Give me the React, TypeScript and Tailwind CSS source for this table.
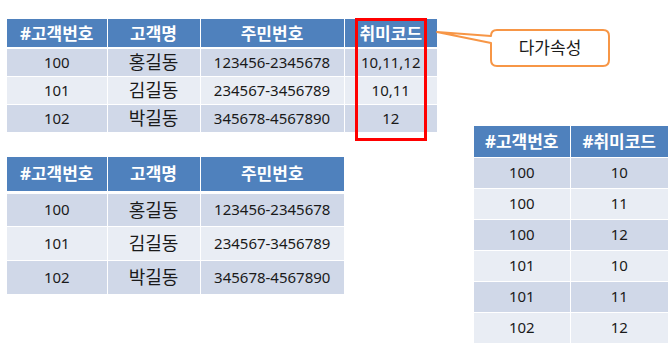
import React from 'react';

type Col = { label: string; width: number };

const font = { fontFamily: '"Noto Sans", "Noto Sans CJK KR", sans-serif' };

const customerCols: Col[] = [
  { label: '#고객번호', width: 100 },
  { label: '고객명', width: 93 },
  { label: '주민번호', width: 144 },
];

const customers = [
  ['100', '홍길동', '123456-2345678', '10,11,12'],
  ['101', '김길동', '234567-3456789', '10,11'],
  ['102', '박길동', '345678-4567890', '12'],
];

const hobbies = [
  ['100', '10'],
  ['100', '11'],
  ['100', '12'],
  ['101', '10'],
  ['101', '11'],
  ['102', '12'],
];

function DataTable({
  cols,
  rows,
  headH,
  headGap,
  rowH,
}: {
  cols: Col[];
  rows: string[][];
  headH: string;
  headGap: string;
  rowH: string;
}) {
  const total = cols.reduce((s, c) => s + c.width, 0);
  return (
    <table className="border-collapse table-fixed" style={{ ...font, width: total }}>
      <thead>
        <tr className={`${headH} ${headGap} bg-[#4f81bd] border-white`}>
          {cols.map((c) => (
            <th
              key={c.label}
              style={{ width: c.width }}
              className="p-0 text-[17px] font-bold text-white text-center border-l border-white first:border-l-0 leading-none"
            >
              {c.label}
            </th>
          ))}
        </tr>
      </thead>
      <tbody>
        {rows.map((r, i) => (
          <tr
            key={i}
            className={`${rowH} ${i % 2 === 0 ? 'bg-[#d0d8e8]' : 'bg-[#e9edf4]'} border-t border-white first:border-t-0`}
          >
            {r.map((v, j) => (
              <td
                key={j}
                className={`p-0 text-center text-[#1a1a1a] border-l border-white first:border-l-0 leading-none ${
                  /[가-힣]/.test(v) ? 'text-[18px]' : 'text-[15px]'
                }`}
              >
                {v}
              </td>
            ))}
          </tr>
        ))}
      </tbody>
    </table>
  );
}

export default function App() {
  return (
    <div className="relative w-[671px] h-[345px] bg-white flex items-start overflow-hidden">
      <div className="flex flex-col items-start gap-[25px] pl-[7px] pt-[19px]">
        <DataTable
          cols={[...customerCols, { label: '취미코드', width: 93 }]}
          rows={customers}
          headH="h-[29px]"
          headGap="border-b-2"
          rowH="h-[28px]"
        />
        <DataTable
          cols={customerCols}
          rows={customers.map((r) => r.slice(0, 3))}
          headH="h-[35px]"
          headGap="border-b-[3px]"
          rowH="h-[34px]"
        />
      </div>

      <div className="ml-[37px] pt-[126px]">
        <DataTable
          cols={[
            { label: '#고객번호', width: 96 },
            { label: '#취미코드', width: 98 },
          ]}
          rows={hobbies}
          headH="h-[31px]"
          headGap="border-b"
          rowH="h-[31px]"
        />
      </div>

      {/* highlight around 취미코드 column */}
      <div className="absolute left-[355px] top-[18px] w-[72px] h-[123px] border-[3px] border-[#ff0000]" />

      {/* callout */}
      <svg className="absolute left-0 top-0 pointer-events-none" width="671" height="345">
        <path
          d="M497 30 H603 Q609 30 609 36 V60 Q609 66 603 66 H497 Q491 66 491 60 V43 L437 32 L491 36 Q491 30 497 30 Z"
          fill="white"
          stroke="#f79646"
          strokeWidth="2"
          strokeLinejoin="round"
        />
      </svg>
      <div
        className="absolute left-[491px] top-[30px] w-[118px] h-[36px] flex items-center justify-center text-[17px] text-[#1a1a1a]"
        style={font}
      >
        다가속성
      </div>
    </div>
  );
}
